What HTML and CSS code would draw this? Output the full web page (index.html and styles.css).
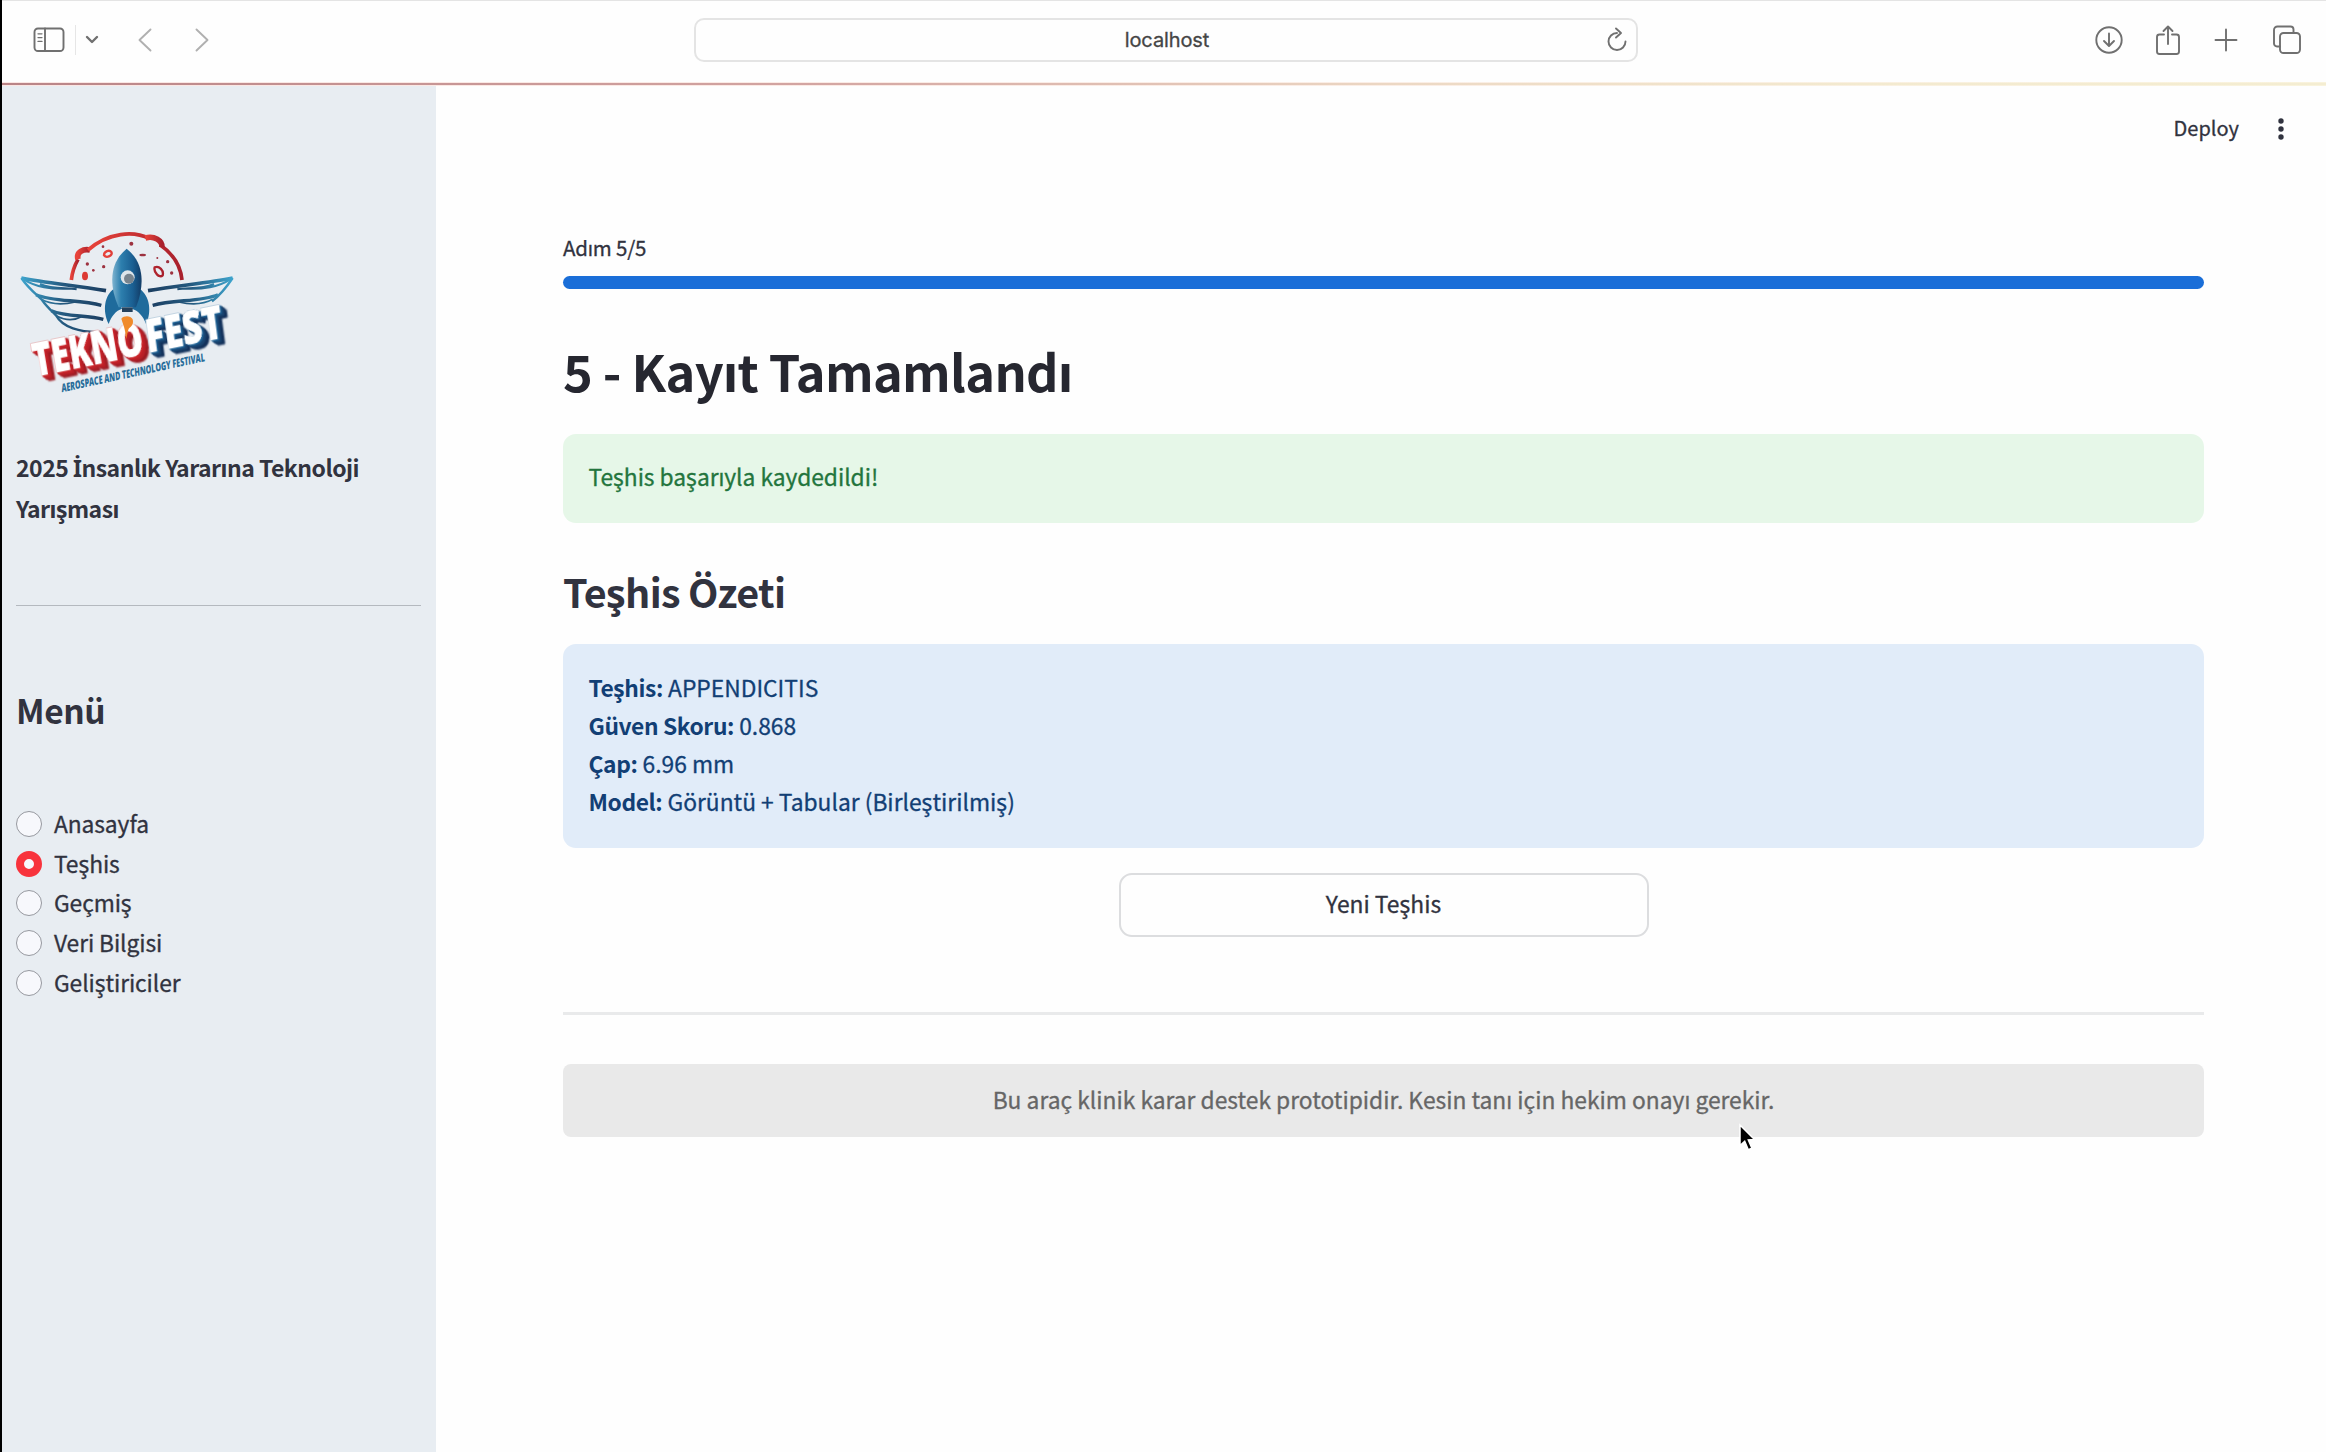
FILE: index.html
```
<!DOCTYPE html>
<html lang="tr">
<head>
<meta charset="utf-8">
<title>localhost</title>
<link rel="stylesheet" href="styles.css">
</head>
<body>
<div class="window">
  <header class="toolbar">
    <div class="tools tools-left">
      <svg class="icon" width="34" height="28" viewBox="0 0 34 28"><rect x="2.5" y="2.5" width="29" height="22.5" rx="3.5"/><path d="M13 2.5V25"/><path class="thin" d="M6 7.8h4M6 11.6h4M6 15.4h4"/></svg>
      <span class="divider"></span>
      <svg class="icon chevron" width="14" height="10" viewBox="0 0 14 10"><path d="M2 2l5 5 5-5"/></svg>
      <svg class="icon faded back" width="16" height="26" viewBox="0 0 16 26"><path d="M13.5 2.5L2.5 13l11 10.500"/></svg>
      <svg class="icon faded forward" width="16" height="26" viewBox="0 0 16 26"><path d="M2.500 2.500L13.500 13l-11 10.500"/></svg>
    </div>
    <div class="address">
      <span class="host">localhost</span>
      <svg class="icon reload" width="22" height="26" viewBox="0 0 22 26"><path d="M11 6A8.500 8.500 0 1 0 19.500 14.500"/><path d="M10 1.500l5 4.500-5 4.500"/></svg>
    </div>
    <div class="tools tools-right">
      <svg class="icon" width="30" height="30" viewBox="0 0 30 30"><circle cx="15" cy="15" r="12.700"/><path d="M15 8.500v12M10 16l5 5 5-5"/></svg>
      <svg class="icon" width="26" height="32" viewBox="0 0 26 32"><path d="M9 10.500H4.500a2.500 2.500 0 0 0-2.500 2.500v14.500a2.500 2.500 0 0 0 2.500 2.500h17a2.500 2.500 0 0 0 2.500-2.500V13a2.500 2.500 0 0 0-2.500-2.500H17M13 20V3M8.500 7L13 2.500 17.500 7"/></svg>
      <svg class="icon" width="24" height="24" viewBox="0 0 24 24"><path d="M12 1.500v21M1.500 12h21"/></svg>
      <svg class="icon" width="30" height="30" viewBox="0 0 30 30"><rect x="8" y="8" width="20" height="20" rx="3.500"/><path d="M8 21.500H5A3 3 0 0 1 2 18.500V5A3.500 3.500 0 0 1 5.500 1.500H18.500A3 3 0 0 1 21.500 4.500V8"/></svg>
    </div>
  </header>
  <div class="app">
    <aside class="sidebar">
      <svg class="logo" width="258" height="200" viewBox="6 0 774 600">
        <defs>
          <linearGradient id="body" x1="0" x2="1"><stop offset="0" stop-color="#7fb4d0"/><stop offset=".3" stop-color="#2d7fae"/><stop offset=".7" stop-color="#1a5f92"/><stop offset="1" stop-color="#123c66"/></linearGradient>
          <linearGradient id="wing" x1="60" x2="320" y1="0" y2="0" gradientUnits="userSpaceOnUse"><stop offset="0" stop-color="#3fa6cf"/><stop offset=".5" stop-color="#24597f"/><stop offset="1" stop-color="#1b3d60"/></linearGradient>
          <linearGradient id="moon" x1="0" x2="1"><stop offset="0" stop-color="#e8433a"/><stop offset="1" stop-color="#a8202c"/></linearGradient>
        </defs>
        <g fill="none" stroke="url(#moon)">
          <path stroke-width="11" d="M214 210C217 180 226 162 234 148"/>
          <path stroke-width="17" d="M234 148C228 126 250 116 270 120"/>
          <path stroke-width="11" d="M264 120C326 66 402 62 448 86M480 104C520 132 542 168 546 210"/>
          <path stroke-width="17" d="M436 84C462 76 488 92 486 112"/>
          <path stroke-width="7" d="M312 136c0-12 16-18 22-10c6 10-14 20-22 10zM464 172c14-6 28 10 24 24c-10 10-28-10-24-24z"/>
        </g>
        <g fill="#9d3240"><ellipse cx="255" cy="198" rx="9" ry="13" fill="#dc3a34"/><circle cx="262" cy="162" r="5"/><circle cx="280" cy="181" r="4"/><circle cx="309" cy="110" r="4"/><circle cx="394" cy="101" r="6"/><circle cx="311" cy="170" r="5"/><ellipse cx="428" cy="135" rx="10" ry="4"/><circle cx="503" cy="155" r="5"/><circle cx="515" cy="189" r="5"/><circle cx="472" cy="144" r="3"/></g>
        <g fill="none" stroke="url(#wing)">
          <path stroke-width="7" d="M64 204C84 234 110 254 126 270C140 290 156 304 168 316C188 352 240 368 300 366"/>
          <path stroke-width="11" d="M64 204C140 220 230 226 318 242"/>
          <path stroke-width="6" d="M70 208C110 232 150 238 206 236M120 222C160 240 200 232 230 238"/>
          <path stroke-width="10" d="M108 254C160 276 240 268 304 286"/>
          <path stroke-width="5" d="M124 268C160 288 200 282 226 276"/>
          <path stroke-width="10" d="M154 302C200 322 260 314 310 328"/>
          <path stroke-width="5" d="M170 318C200 334 226 330 244 320"/>
        </g>
        <g fill="none" stroke="url(#wing)" transform="matrix(-1 0 0 1 762 0)">
          <path stroke-width="7" d="M64 204C84 234 100 254 126 274"/>
          <path stroke-width="11" d="M64 204C140 220 230 226 318 242"/>
          <path stroke-width="6" d="M70 208C110 232 150 238 206 236M120 222C160 240 200 232 230 238"/>
          <path stroke-width="10" d="M108 254C160 276 240 268 304 286"/>
          <path stroke-width="5" d="M124 268C160 288 200 282 226 276"/>
        </g>
        <path fill="#1f6b9c" d="M342 236C314 256 306 300 326 342C334 318 348 302 366 296zM418 236C450 256 456 306 438 342C430 318 414 302 396 296z"/>
        <path fill="url(#body)" d="M380 116C338 150 320 210 356 292H408C440 210 424 150 380 116z"/>
        <path fill="#24415c" d="M366 292h32v14h-32z"/>
        <circle cx="383" cy="202" r="21" fill="#dde5ea"/><circle cx="387" cy="206" r="15" fill="#77848e"/>
        <g class="wordmark">
          <text class="tekno" transform="translate(106 500) rotate(-11.500) skewX(-2)" textLength="336" lengthAdjust="spacingAndGlyphs">TEKNO</text>
          <text class="fest" transform="translate(443 429) rotate(-11.500) skewX(-4)" textLength="234" lengthAdjust="spacingAndGlyphs">FEST</text>
          <text class="tagline" transform="translate(185 547) rotate(-12.300) skewX(-8)" textLength="440" lengthAdjust="spacingAndGlyphs">AEROSPACE AND TECHNOLOGY FESTIVAL</text>
        </g>
        <path fill="#f08b2b" d="M364 326C372 316 392 316 398 328C402 342 394 350 386 356C382 366 382 376 378 388C378 366 372 350 364 326z"/>
      </svg>
      <p class="event">2025 <span class="dotted">İ</span>nsanlık Yararına Teknoloji Yarışması</p>
      <hr class="side-rule">
      <h2 class="menu-title">Menü</h2>
      <ul class="menu">
        <li><i class="radio"></i>Anasayfa</li>
        <li><i class="radio on"></i>Teşhis</li>
        <li><i class="radio"></i>Geçmiş</li>
        <li><i class="radio"></i>Veri Bilgisi</li>
        <li><i class="radio"></i>Geliştiriciler</li>
      </ul>
    </aside>
    <main class="main">
      <div class="actions"><span>Deploy</span>
        <svg width="8" height="24" viewBox="0 0 8 24" fill="#31333f"><circle cx="4" cy="4" r="2.700"/><circle cx="4" cy="12" r="2.700"/><circle cx="4" cy="20" r="2.700"/></svg>
      </div>
      <p class="step">Adım 5/5</p>
      <div class="progress"></div>
      <h1>5 - Kayıt Tamamlandı</h1>
      <div class="success">Teşhis başarıyla kaydedildi!</div>
      <h2 class="summary-title">Teşhis Özeti</h2>
      <div class="summary">
        <p><b>Teşhis:</b> APPENDICITIS</p>
        <p><b>Güven Skoru:</b> 0.868</p>
        <p><b>Çap:</b> 6.96 mm</p>
        <p><b>Model:</b> Görüntü + Tabular (Birleştirilmiş)</p>
      </div>
      <button class="again">Yeni Teşhis</button>
      <hr class="main-rule">
      <footer class="note">Bu araç klinik karar destek prototipidir. Kesin tanı için hekim onayı gerekir.</footer>
    </main>
  </div>
  <svg class="cursor" width="22" height="32" viewBox="0 0 22 32"><path d="M3 2v20.500l4.700-4.300 3.600 8.600 3.600-1.500-3.600-8.400 6.200-.4z" fill="#000" stroke="#fff" stroke-width="1.500"/></svg>
</div>
</body>
</html>
```
FILE: styles.css
```
* { box-sizing: border-box; margin: 0; padding: 0; }

body {
  background: #fefefe;
  color: #31333f;
  font: 400 22.8px/38px "Noto Sans CJK SC", "Noto Sans", sans-serif;
  -webkit-text-stroke: .3px currentColor;
}

.window {
  position: relative;
  display: flex;
  flex-direction: column;
  width: 2326px;
  height: 1452px;
  overflow: hidden;
  border-left: 2px solid #000;
}

/* Browser toolbar */
.toolbar {
  display: flex;
  align-items: center;
  justify-content: space-between;
  height: 86px;
  padding: 0 24px 7px 30px;
  border-top: 1px solid #e4e4e4;
  background:
    linear-gradient(90deg, #b98487, #d3a5a2 35%, #ecd8c4 60%, #f3ead0 80%, #f4edd2) 0 82px / 100% 2px no-repeat,
    linear-gradient(90deg, #fbe6e3, #fbeee6 60%, #f9f3dc) 0 81px / 100% 4px no-repeat,
    #fefefe;
}
.tools { display: flex; align-items: center; }
.tools-left { width: 662px; }
.tools-right { width: 664px; justify-content: flex-end; }
.tools-right .icon + .icon { margin-left: 34px; }
.tools-right .icon:nth-child(2) { margin-left: 31px; }
.tools-right .icon:nth-child(3) { margin-left: 33px; }
.icon { fill: none; stroke: #707070; stroke-width: 1.9; stroke-linecap: round; stroke-linejoin: round; }
.icon .thin { stroke-width: 1.3; }
.icon.faded { stroke: #b0b0b0; }
.divider { width: 1px; height: 30px; margin-left: 9px; background: #e6e6e6; }
.chevron { margin-left: 9px; stroke-width: 2.4; }
.back { margin-left: 38px; }
.forward { margin-left: 41px; }
.address {
  display: flex;
  align-items: center;
  width: 944px;
  height: 44px;
  padding-right: 8px;
  border: 2px solid #e4e4e4;
  border-radius: 10px;
}
.host {
  flex: 1;
  padding-left: 32px;
  text-align: center;
  color: #454545;
  font: 400 20px/28px Inter, sans-serif;
  letter-spacing: -.1px;
}

.app { display: flex; flex: 1; }

/* Sidebar */
.sidebar { width: 434px; padding: 124px 15px 0 14px; background: #e8edf2; }
.logo { display: block; margin-left: -14px; overflow: visible; }
.wordmark { font-family: "Open Sans", sans-serif; font-weight: 800; -webkit-text-stroke: 0; }
.tekno, .fest { font-size: 138px; fill: #fff; stroke: #fff; stroke-width: 2; }
.tekno { filter: drop-shadow(0 0 2px #c9252a) drop-shadow(4px 5px 0 #c9252a) drop-shadow(7px 7px 0 #b81f27) drop-shadow(8px 8px 0 #9c1a22); }
.fest { filter: drop-shadow(0 0 2px #1f6396) drop-shadow(4px 4px 0 #1f6396) drop-shadow(7px 7px 0 #194470) drop-shadow(9px 8px 0 #12305a); }
.tagline { font-size: 34px; fill: #286d9a; }
.event { margin-top: 38px; font-size: 23px; font-weight: 700; line-height: 39.5px; letter-spacing: -.5px; -webkit-text-stroke: 0; }
.dotted { font-family: "Noto Sans", sans-serif; }
.side-rule { height: 1px; margin-top: 77px; border: 0; background: #b4b9bf; }
.menu-title { margin-top: 84px; font-size: 33.500px; line-height: 40px; letter-spacing: -.4px; -webkit-text-stroke: 0; }
.menu { margin-top: 74px; list-style: none; }
.menu li { display: flex; align-items: center; gap: 12px; height: 39.700px; letter-spacing: -.1px; }
.radio { width: 26px; height: 26px; border: 1px solid #96989f; border-radius: 50%; background: #f7f8fc; }
.radio.on { border: 8px solid #f8333c; }

/* Page */
.main { display: flex; flex: 1; flex-direction: column; padding: 0 122px 0 127px; }
.actions { display: flex; align-items: center; justify-content: flex-end; gap: 38px; height: 86px; margin-right: -81px; font-size: 20px; line-height: 30px; }
.actions span { padding-bottom: 3px; }
.step { margin-top: 60px; font-size: 20.500px; line-height: 30px; letter-spacing: -.2px; }
.progress { height: 13px; margin-top: 14px; border-radius: 7px; background: #1a6ed8; }
h1 { margin-top: 51px; font-size: 50.500px; line-height: 60px; letter-spacing: -.7px; color: #262730; -webkit-text-stroke: 0; }
.success { height: 89px; margin-top: 34px; padding: 24px 25.5px; border-radius: 13px; background: #e6f7e8; color: #23753d; letter-spacing: -.05px; }
.summary-title { margin-top: 43px; font-size: 39.500px; line-height: 50px; letter-spacing: -.7px; -webkit-text-stroke: 0; }
.summary { height: 204px; margin-top: 28px; padding: 25px 25.5px; border-radius: 13px; background: #e1ecf9; color: #123f75; }
.summary b { letter-spacing: -.4px; -webkit-text-stroke: 0; }
.again {
  align-self: center;
  width: 530px;
  height: 64px;
  margin-top: 25px;
  padding-bottom: 3px;
  border: 2px solid #dcdddf;
  border-radius: 13px;
  background: transparent;
  color: inherit;
  font: inherit;
  -webkit-text-stroke: inherit;
}
.main-rule { height: 3px; margin-top: 75px; border: 0; background: #e9eaeb; }
.note { height: 73px; margin-top: 49px; border-radius: 8px; background: #e9e9e9; color: #666; line-height: 72px; text-align: center; }

.cursor { position: absolute; left: 1735px; top: 1123px; }
```
